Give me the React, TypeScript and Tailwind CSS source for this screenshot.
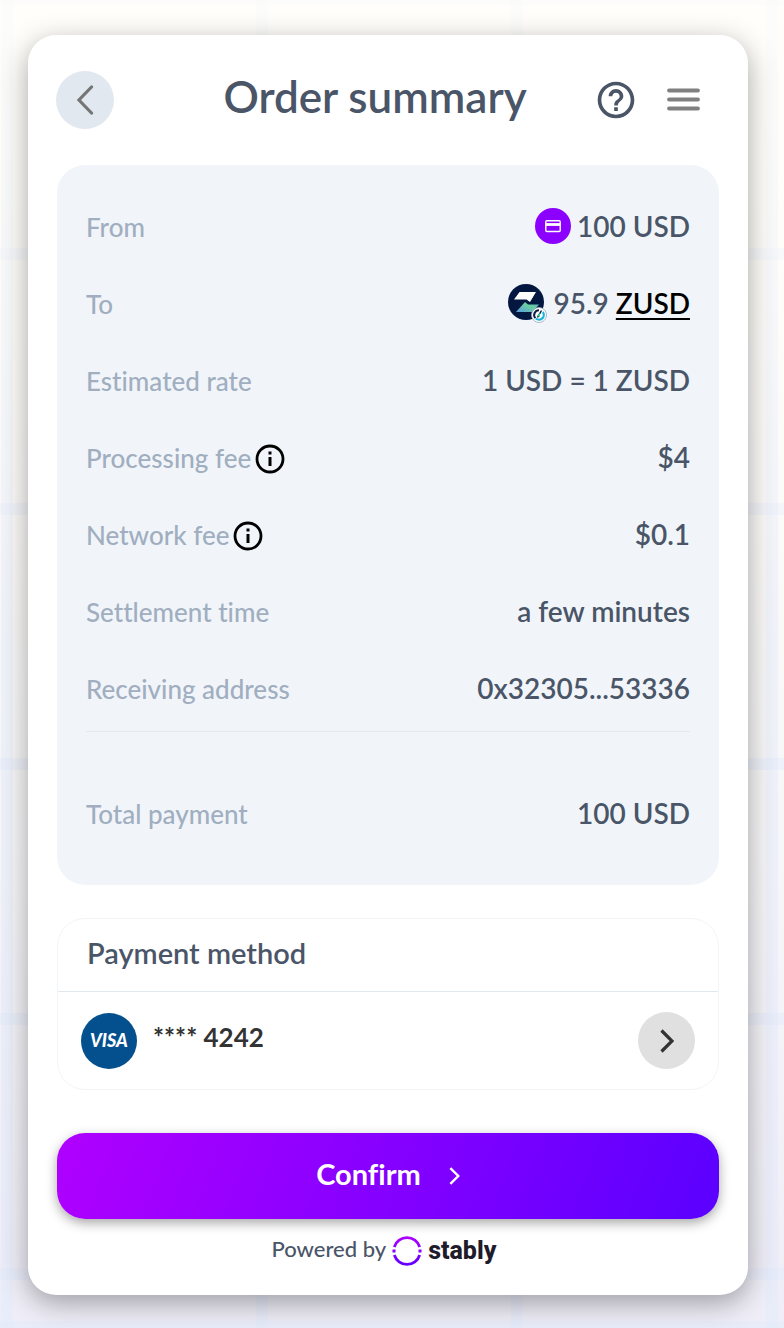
import React from "react";

function BackIcon() {
  return (
    <svg viewBox="0 0 18 30" className="h-[30px] w-[18px]" fill="none" aria-hidden="true">
      <path d="M15.500 2 3 15l12.500 13" stroke="#757575" strokeWidth="3.200" strokeLinecap="round" />
    </svg>
  );
}

function HelpIcon() {
  return (
    <svg viewBox="0 0 24 24" className="size-11" fill="#4a5568" aria-hidden="true">
      <path d="M11 18h2v-2h-2v2zm1-16C6.480 2 2 6.480 2 12s4.480 10 10 10 10-4.480 10-10S17.520 2 12 2zm0 18c-4.410 0-8-3.590-8-8s3.590-8 8-8 8 3.590 8 8-3.590 8-8 8zm0-14c-2.210 0-4 1.790-4 4h2c0-1.100.9-2 2-2s2 .9 2 2c0 2-3 1.750-3 5h2c0-2.250 3-2.500 3-5 0-2.210-1.790-4-4-4z" />
    </svg>
  );
}

function MenuIcon() {
  return (
    <svg viewBox="0 0 33 24" className="h-6 w-[33px]" aria-hidden="true">
      <path d="M2 2.500h29M2 11.500h29M2 20.500h29" stroke="#808080" strokeWidth="3.800" strokeLinecap="round" />
    </svg>
  );
}

function InfoIcon() {
  return (
    <svg viewBox="0 0 30 30" className="size-[30px]" aria-hidden="true">
      <circle cx="15" cy="15" r="13" fill="none" stroke="#000" strokeWidth="2.800" />
      <path d="M13.500 7.500h3v3h-3zM13.500 13h3v9h-3z" />
    </svg>
  );
}

function CardIcon() {
  return (
    <svg viewBox="0 0 36 36" className="size-9" aria-hidden="true">
      <circle cx="18" cy="18" r="18" fill="#8b00ff" />
      <rect x="10.800" y="12.700" width="14.400" height="10.800" rx="1" fill="none" stroke="#fff" strokeWidth="1.400" />
      <path d="M11 16.500h14" stroke="#fff" strokeWidth="2.800" />
    </svg>
  );
}

function ZusdIcon() {
  return (
    <svg viewBox="0 0 39 39" className="size-[39px]" aria-hidden="true">
      <defs>
        <linearGradient id="zusd" x1="0" y1="1" x2="1" y2="0">
          <stop offset="0" stopColor="#5a9be0" />
          <stop offset="0.600" stopColor="#69d0a0" />
          <stop offset="1" stopColor="#58a9d0" />
        </linearGradient>
      </defs>
      <circle cx="18" cy="18" r="18" fill="#031741" />
      <path d="M11.500 8H28l-6 10-3.500-2.500H6z" fill="#fff" />
      <path d="M8 28l9-10 3 2.500h11L24.500 28z" fill="url(#zusd)" />
      <circle cx="31" cy="31" r="7.500" fill="#fff" stroke="#9aa7b8" strokeWidth="0.800" />
      <path d="M31 26.200a4.800 4.800 0 0 0-3.600 8" fill="none" stroke="#0b1b45" strokeWidth="2" />
      <path d="M27.800 34.500a4.800 4.800 0 0 0 7-6.500" fill="none" stroke="#18b4dc" strokeWidth="2.200" />
      <path d="M29.500 33.500l4-7" stroke="#0b1b45" strokeWidth="1.500" />
      <path d="M29 31.500l3-2.500v4z" fill="#35c99b" />
    </svg>
  );
}

function StablyMark() {
  return (
    <svg viewBox="0 0 30 30" className="size-[30px]" fill="none" aria-hidden="true">
      <defs>
        <linearGradient id="stably" x1="0" y1="0" x2="0" y2="30" gradientUnits="userSpaceOnUse">
          <stop stopColor="#b000ff" />
          <stop offset="1" stopColor="#5f00ff" />
        </linearGradient>
      </defs>
      <g stroke="url(#stably)" strokeWidth="2.800">
        <path d="M2.300 11a13.300 13.300 0 0 1 25.400 0M2.300 19a13.300 13.300 0 0 0 25.400 0" />
      </g>
      <path d="M.5 13.500h3v3h-3zM26.500 13.500h3v3h-3z" fill="#8800ff" />
    </svg>
  );
}

function Chevron({ className }: { className: string }) {
  return (
    <svg viewBox="0 0 14 24" className={className} fill="none" stroke="currentColor" aria-hidden="true">
      <path d="M1.500 1.500 12 12 1.500 22.500" strokeWidth="3.200" />
    </svg>
  );
}

function InfoButton({ label }: { label: string }) {
  return (
    <button type="button" aria-label={label} className="ml-1">
      <InfoIcon />
    </button>
  );
}

function SummaryRow({ label, info, children }: { label: string; info?: string; children: React.ReactNode }) {
  return (
    <div className="flex h-[77px] items-center justify-between">
      <dt className="flex items-center text-[26px] font-medium text-[#a0aec0]">
        {label}
        {info && <InfoButton label={info} />}
      </dt>
      <dd className="flex items-center gap-[6px] pb-[3px] text-[28px] font-semibold text-[#4a5568]">{children}</dd>
    </div>
  );
}

function App() {
  return (
    <main className="min-h-screen bg-[linear-gradient(180deg,#fffefacc,transparent_50%),repeating-linear-gradient(90deg,#e0e9fb66_0_12px,transparent_12px_255px),repeating-linear-gradient(180deg,#e0e9fb66_0_12px,transparent_12px_255px),linear-gradient(180deg,#fffefa,#f9f8f8_55%,#efeef8)] bg-[position:0_0,1px_0,0_-7px,0_0] pt-[35px] pr-9 pb-[33px] pl-7 font-['Lato',sans-serif] text-[#4a5568] [font-variant-ligatures:none]">
      <div className="rounded-[28px] bg-white px-[29px] pt-9 pb-[29px] shadow-[0_8px_28px_#00000059]">
        <header className="-ml-px flex items-center">
          <button type="button" aria-label="Back" className="flex size-[58px] items-center justify-center rounded-full bg-[#e2e8f0]">
            <BackIcon />
          </button>
          <h1 className="flex-1 pb-2 pl-[42px] text-center text-[44px] leading-[50px] font-semibold">Order summary</h1>
          <div className="flex items-center gap-[29px] pr-[19px]">
            <button type="button" aria-label="Help">
              <HelpIcon />
            </button>
            <button type="button" aria-label="Menu">
              <MenuIcon />
            </button>
          </div>
        </header>

        <dl className="mt-9 rounded-[28px] bg-[#f1f5fa] px-[29px] pt-6 pb-8">
          <SummaryRow label="From">
            <CardIcon />
            <span>100 USD</span>
          </SummaryRow>
          <SummaryRow label="To">
            <ZusdIcon />
            <span>
              95.9{" "}
              <a href="#zusd" className="text-black underline decoration-2 underline-offset-4">
                ZUSD
              </a>
            </span>
          </SummaryRow>
          <SummaryRow label="Estimated rate">1 USD = 1 ZUSD</SummaryRow>
          <SummaryRow label="Processing fee" info="About the processing fee">
            $4
          </SummaryRow>
          <SummaryRow label="Network fee" info="About the network fee">
            $0.1
          </SummaryRow>
          <SummaryRow label="Settlement time">a few minutes</SummaryRow>
          <SummaryRow label="Receiving address">0x32305...53336</SummaryRow>
          <div className="mt-[3px] border-t border-[#e2e8f0] pt-11">
            <SummaryRow label="Total payment">100 USD</SummaryRow>
          </div>
        </dl>

        <section className="mt-[33px] rounded-[28px] border border-[#f3f4f8]">
          <h2 className="border-b border-[#e2e8f0] px-[29px] pt-[14px] pb-[18px] text-[29px] leading-10 font-semibold">Payment method</h2>
          <div className="flex items-center px-[23px] py-5">
            <div className="flex size-14 items-center justify-center rounded-full bg-[#04508f] text-[18px] font-black text-white italic">VISA</div>
            <p className="ml-4 flex-1 pb-[6px] text-[26px] font-bold text-[#333]">**** 4242</p>
            <button type="button" aria-label="Change payment method" className="flex size-[57px] items-center justify-center rounded-full bg-[#e0e0e0] text-[#333]">
              <Chevron className="h-6 w-[14px]" />
            </button>
          </div>
        </section>

        <button
          type="button"
          className="mt-[43px] flex h-[86px] w-full items-center justify-center gap-7 rounded-[28px] bg-[linear-gradient(110deg,#b000ff,#5a00ff)] pb-1 text-[29px] font-bold text-white shadow-[0_4px_12px_#00000059]"
        >
          Confirm
          <Chevron className="mt-1 h-[18px] w-[11px]" />
        </button>

        <footer className="mt-4 flex h-[31px] items-center justify-center pr-2 text-[22px] font-medium">
          <span className="pb-1">Powered by</span>
          <a href="#stably" className="ml-[6px] flex items-center gap-[6px] font-['Roboto',sans-serif] text-[25px] font-extrabold text-[#1f1b2b]">
            <StablyMark />
            stably
          </a>
        </footer>
      </div>
    </main>
  );
}

export default App;
